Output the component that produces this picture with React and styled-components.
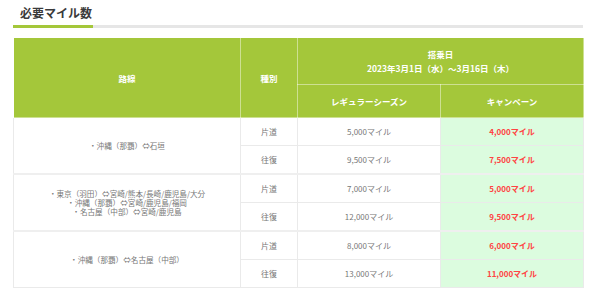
import React from "react";
import styled, { createGlobalStyle } from "styled-components";

const GlobalStyle = createGlobalStyle`
  body {
    margin: 0;
    background: #fff;
    font-family: "Noto Sans CJK JP", "Noto Sans", sans-serif;
  }
`

const Page = styled.div`
  width: 570px;
  padding: 0 17px 0 13px;
`

const Heading = styled.h2`
  margin: 0;
  padding: 5px 0 0 7px;
  font-size: 12px;
  line-height: 16px;
  font-weight: bold;
  color: #3a3a3a;
`

const Underline = styled.div`
  display: flex;
  height: 3px;
  margin: 4px 0 9px;
`

const UnderlinePart = styled.div`
  width: ${({ width }) => width || 'auto'};
  flex: ${({ width }) => width ? 'none' : '1'};
  background: ${({ green }) => green ? '#a4c73a' : '#e6e6e6'};
`

const MileTable = styled.table`
  width: 570px;
  table-layout: fixed;
  border-collapse: collapse;
  border: 1px solid #e6e6e6;
`

const HeadCell = styled.th`
  background: #a4c73a;
  color: #fff;
  font-size: 8.5px;
  font-weight: bold;
  line-height: 14px;
  text-align: center;
  padding: 0;
  height: ${({ h }) => h || 'auto'};
  border: 1px solid rgba(255, 255, 255, 0.45);
`

const BodyCell = styled.td`
  background: ${({ campaign }) => campaign ? '#dcfcdf' : '#fff'};
  color: ${({ campaign }) => campaign ? '#ff4343' : '#777'};
  font-weight: ${({ campaign }) => campaign ? 'bold' : 'normal'};
  font-size: 8px;
  line-height: 9px;
  text-align: center;
  padding: 0;
  height: 27px;
  border: 1px solid #eaeaea;
  border-bottom: ${({ groupEnd }) => groupEnd ? '2px solid #efefef' : '1px solid #eaeaea'};
`

const RouteLine = styled.div`
  white-space: nowrap;
  font-size: 7.6px;
  line-height: 9px;
`

const groups = [
  {
    routes: ['・沖縄（那覇）⇔石垣'],
    rows: [
      ['片道', '5,000マイル', '4,000マイル'],
      ['往復', '9,500マイル', '7,500マイル'],
    ],
  },
  {
    routes: [
      '・東京（羽田）⇔宮崎/熊本/長崎/鹿児島/大分',
      '・沖縄（那覇）⇔宮崎/鹿児島/福岡',
      '・名古屋（中部）⇔宮崎/鹿児島',
    ],
    rows: [
      ['片道', '7,000マイル', '5,000マイル'],
      ['往復', '12,000マイル', '9,500マイル'],
    ],
  },
  {
    routes: ['・沖縄（那覇）⇔名古屋（中部）'],
    rows: [
      ['片道', '8,000マイル', '6,000マイル'],
      ['往復', '13,000マイル', '11,000マイル'],
    ],
  },
]

export default function App() {
  return (
    <Page>
      <GlobalStyle />
      <Heading>必要マイル数</Heading>
      <Underline>
        <UnderlinePart green width="80px" />
        <UnderlinePart />
      </Underline>
      <MileTable>
        <colgroup>
          <col style={{ width: 227 }} />
          <col style={{ width: 57 }} />
          <col style={{ width: 143 }} />
          <col style={{ width: 143 }} />
        </colgroup>
        <thead>
          <tr>
            <HeadCell rowSpan={2}>路線</HeadCell>
            <HeadCell rowSpan={2}>種別</HeadCell>
            <HeadCell colSpan={2} h="46px">
              搭乗日<br />2023年3月1日（水）～3月16日（木）
            </HeadCell>
          </tr>
          <tr>
            <HeadCell h="32px">レギュラーシーズン</HeadCell>
            <HeadCell h="32px">キャンペーン</HeadCell>
          </tr>
        </thead>
        <tbody>
          {groups.map((group, gi) =>
            group.rows.map((row, ri) => {
              const last = ri === group.rows.length - 1 && gi < groups.length - 1;
              return (
                <tr key={`${gi}-${ri}`}>
                  {ri === 0 && (
                    <BodyCell rowSpan={group.rows.length} groupEnd={gi < groups.length - 1}>
                      {group.routes.map(r => <RouteLine key={r}>{r}</RouteLine>)}
                    </BodyCell>
                  )}
                  <BodyCell groupEnd={last}>{row[0]}</BodyCell>
                  <BodyCell groupEnd={last}>{row[1]}</BodyCell>
                  <BodyCell groupEnd={last} campaign>{row[2]}</BodyCell>
                </tr>
              )
            })
          )}
        </tbody>
      </MileTable>
    </Page>
  )
}
